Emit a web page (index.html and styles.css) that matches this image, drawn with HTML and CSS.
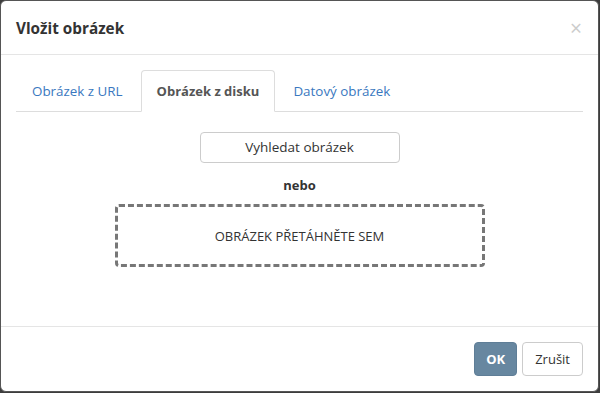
FILE: index.html
```html
<!DOCTYPE html>
<html lang="cs">
<head>
    <meta charset="UTF-8">
    <title>Vložit obrázek</title>
    <link rel="stylesheet" href="styles.css">
</head>
<body>
    <div class="modal">
        <div class="modal-header">
            <h4 class="modal-title">Vložit obrázek</h4>
            <span class="close">&times;</span>
        </div>
        <div class="modal-body">
            <ul class="nav-tabs">
                <li><a href="#">Obrázek z URL</a></li>
                <li class="active"><a href="#">Obrázek z disku</a></li>
                <li><a href="#">Datový obrázek</a></li>
            </ul>
            <div class="tab-pane">
                <button type="button" class="btn btn-browse">Vyhledat obrázek</button>
                <div class="or">nebo</div>
                <div class="dropzone">OBRÁZEK PŘETÁHNĚTE SEM</div>
            </div>
        </div>
        <div class="modal-footer">
            <button type="button" class="btn btn-primary">OK</button>
            <button type="button" class="btn">Zrušit</button>
        </div>
    </div>
</body>
</html>
```

FILE: styles.css
```css
body {
    margin: 0;
    background-color: #3d3d3d;
    font-family: 'Open Sans', sans-serif;
    font-size: 13px;
    color: #333;
}
.modal {
    width: 597px;
    height: 390px;
    display: flex;
    flex-direction: column;
    background: #fff;
    border: 1px solid #555;
    border-radius: 6px;
}
.modal-header {
    display: flex;
    justify-content: space-between;
    align-items: center;
    padding: 15px;
    height: 23px;
    border-bottom: 1px solid #e5e5e5;
}
.modal-title {
    margin: 0;
    font-size: 15.3px;
    font-weight: 700;
    color: #333;
}
.close {
    font-size: 21px;
    color: #ccc;
    margin-right: 1px;
}
.modal-body {
    flex: 1;
    padding: 15px;
}
.nav-tabs {
    display: flex;
    list-style: none;
    margin: 0;
    padding: 0;
    border-bottom: 1px solid #ddd;
}
.nav-tabs li {
    margin-right: 2px;
    margin-bottom: -1px;
}
.nav-tabs a {
    display: block;
    padding: 10px 15px;
    line-height: 20px;
    font-size: 13.4px;
    color: #3a78c0;
    text-decoration: none;
    border: 1px solid transparent;
    border-radius: 4px 4px 0 0;
}
.nav-tabs .active a {
    color: #555;
    font-weight: 700;
    font-size: 13px;
    background: #fff;
    border-color: #ddd #ddd transparent;
}
.tab-pane {
    display: flex;
    flex-direction: column;
    align-items: center;
    padding-top: 20px;
}
.btn {
    font-family: inherit;
    font-size: 13px;
    line-height: 20px;
    padding: 6px 12px;
    color: #333;
    background: #fff;
    border: 1px solid #ccc;
    border-radius: 4px;
}
.btn-browse {
    width: 200px;
    font-size: 13.5px;
    line-height: 19px;
    padding: 5px 12px;
}
.or {
    margin-top: 12px;
    font-weight: 700;
    line-height: 20px;
}
.dropzone {
    margin-top: 9px;
    width: 364px;
    height: 57px;
    display: flex;
    align-items: center;
    justify-content: center;
    border: 3px dashed #777;
    border-radius: 4px;
}
.modal-footer {
    display: flex;
    justify-content: flex-end;
    gap: 5px;
    padding: 15px;
    border-top: 1px solid #e5e5e5;
}
.btn-primary {
    color: #fff;
    font-weight: 700;
    padding: 6px 11px;
    background: #6787a0;
    border-color: #5f7e97;
}
```
